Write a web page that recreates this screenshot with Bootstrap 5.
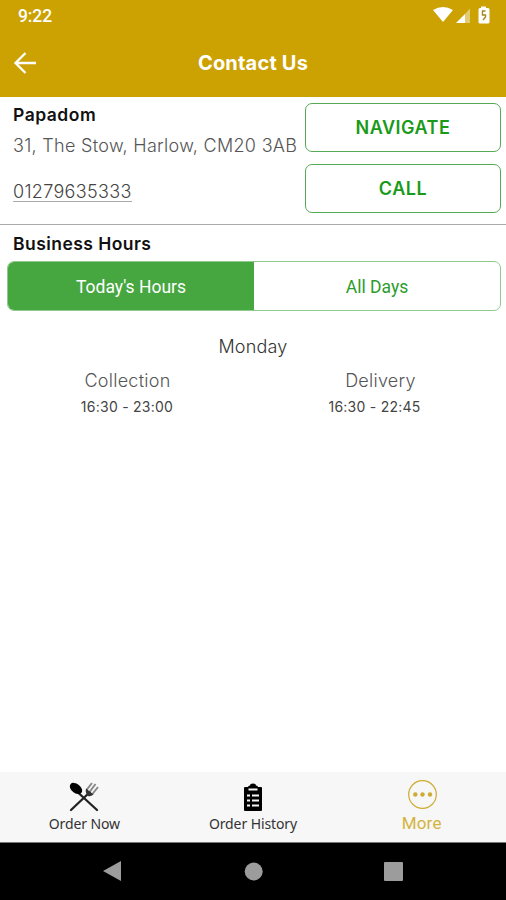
<!DOCTYPE html>
<html lang="en">
<head>
<meta charset="utf-8">
<meta name="viewport" content="width=device-width, initial-scale=1">
<title>Contact Us</title>
<link href="https://cdn.jsdelivr.net/npm/bootstrap@5.3.0/dist/css/bootstrap.min.css" rel="stylesheet">
<style>
body{font-family:Inter,"Liberation Sans",sans-serif;color:#111;background:#fff;overflow:hidden}
svg{display:block;overflow:visible}
.app{height:900px}
.topbar{background:#cca102;height:97px;color:#fff}
.status{height:32px;padding:0 16px 0 18px}
.clock{font:500 17.5px/32px Roboto,sans-serif;letter-spacing:-.1px}
.titlebar{height:65px;display:grid;grid-template-columns:50px 1fr 50px;padding-bottom:3px}
.titlebar h1{font-size:20px;font-weight:700;letter-spacing:.2px;line-height:26px}
.info{height:128px;border-bottom:1px solid #aaa;padding:6px 5px 0 13px}
.name{font-size:17.5px;font-weight:600;line-height:24px;letter-spacing:.5px}
.addr{font-size:18px;line-height:26px;margin-top:6px;color:#555;font-weight:300;white-space:nowrap;letter-spacing:.3px}
.phone{font-size:18px;line-height:19px;margin-top:23px;color:#444;font-weight:300;border-bottom:1px solid #aaa;letter-spacing:.32px}
.actions{width:196px;gap:12px}
.act{height:49px;border:1px solid #56aa56;border-radius:7px;color:#199a19;font-size:18px;font-weight:600;letter-spacing:.5px;padding:0}
.bh{height:36px;padding-left:13px;font-size:17.5px;font-weight:600;line-height:37px;letter-spacing:.45px}
.seg{height:50px;margin:0 5px 0 7px;border:1px solid #91c991;border-radius:7px;overflow:hidden;font:400 17.5px/50px Roboto,sans-serif;color:#2b9c2b}
.seg .on{background:#46a740;color:#fff}
.day{font-size:18px;line-height:24px;margin-top:24px;color:#333;font-weight:300;letter-spacing:.2px}
.kind{font-size:18px;line-height:24px;color:#555;font-weight:300;letter-spacing:.25px;padding-left:2px}
.hrs{font-size:14px;line-height:20px;margin-top:4px;color:#444;letter-spacing:.25px;padding-left:1px}
.hours-row{padding-top:10px}
.late{padding-right:11px}
.tabs{height:70px;background:#f7f7f7;font-family:"Noto Sans",sans-serif;font-size:14px;color:#333}
.tab{height:70px}
.tab span{line-height:20px;letter-spacing:-.1px}
.tab .more{font-family:Roboto,sans-serif;font-size:17px;color:#d5b33c;font-weight:400;letter-spacing:.2px;margin-top:3px}
.sys{height:58px;background:#000;border-top:1px solid #777}
</style>
</head>
<body>
<div class="app d-flex flex-column">
  <header class="topbar">
    <div class="status d-flex justify-content-between">
      <span class="clock">9:22</span>
      <svg width="58" height="32" viewBox="432 0 58 32" fill="#fff"><path d="M433 10Q443 4 453 10L443 22Z"/><path d="M456 23 465 14V23Z"/><path d="M465 14 470 8.5V23H465Z" opacity=".45"/><path d="M481 8V6.500h5V8h2q1.500 0 1.500 1.500V22q0 1.500-1.500 1.500h-8q-1.500 0-1.500-1.500V9.500Q478.500 8 480 8Z"/><path d="M485.500 11H482.500V15H485.500V17L483 20" fill="none" stroke="#a88522" stroke-width="1.400"/></svg>
    </div>
    <div class="titlebar align-items-center">
      <svg width="50" height="30" viewBox="0 0 50 30" fill="none" stroke="#fff" stroke-width="2.300"><path d="M36 15H16M25.500 5 15.500 15 25.500 25"/></svg>
      <h1 class="m-0 text-center">Contact Us</h1>
    </div>
  </header>
  <main class="flex-grow-1">
    <section class="info d-flex justify-content-between">
      <div class="d-flex flex-column align-items-start">
        <div class="name">Papadom</div>
        <div class="addr">31, The Stow, Harlow, CM20 3AB</div>
        <div class="phone">01279635333</div>
      </div>
      <div class="actions d-flex flex-column">
        <button class="btn act">NAVIGATE</button>
        <button class="btn act">CALL</button>
      </div>
    </section>
    <section>
      <h2 class="bh m-0">Business Hours</h2>
      <div class="seg d-flex text-center"><div class="on col-6">Today's Hours</div><div class="col-6">All Days</div></div>
      <div class="day text-center">Monday</div>
      <div class="hours-row row g-0 text-center">
        <div class="col-6"><div class="kind">Collection</div><div class="hrs">16:30 - 23:00</div></div>
        <div class="col-6"><div class="kind">Delivery</div><div class="hrs late">16:30 - 22:45</div></div>
      </div>
    </section>
  </main>
  <nav class="tabs row g-0 text-center">
    <div class="tab col-4 d-flex flex-column align-items-center pt-2">
      <svg class="mt-1" width="32" height="30" viewBox="0 0 32 30"><path d="M10 8.500 29 26M22 8 3 26" stroke="#222" stroke-width="2.300" stroke-linecap="round"/><ellipse cx="8" cy="4.500" rx="7" ry="4.600" transform="rotate(38 8 4.500)"/><path d="M18.500 6 24-1M21.500 8l6-8M24 10.500l6-7.500" stroke="#888" stroke-width="2"/><path d="M18 4.500 25.500 10.500Q22.500 13 20 12Q17 9 18 4.500Z" fill="#333"/></svg>
      <span>Order Now</span>
    </div>
    <div class="tab col-4 d-flex flex-column align-items-center pt-2">
      <svg class="mt-1" width="18" height="30" viewBox="0 0 18 30"><path d="M1 3H4Q4 1.500 6 1.500Q6-.5 9-.5T12 1.500Q14 1.500 14 3h3q1 0 1 1V26q0 1-1 1H1q-1 0-1-1V4q0-1 1-1Z"/><path d="M4.500 5.500h9M3 11.500h3M3 16.500h3M3 21.500h3M8 11.500h7M8 16.500h7M8 21.500h7" stroke="#f7f7f7" stroke-width="1.800"/></svg>
      <span>Order History</span>
    </div>
    <div class="tab col-4 d-flex flex-column align-items-center pt-2">
      <svg width="30" height="30" viewBox="0 0 30 30" fill="#cfab32"><circle cx="15.500" cy="14.500" r="13.800" fill="none" stroke="#cfab32" stroke-width="1.200"/><circle cx="8.300" cy="14.500" r="2.200"/><circle cx="15.500" cy="14.500" r="2.200"/><circle cx="23" cy="14.500" r="2.200"/></svg>
      <span class="more">More</span>
    </div>
  </nav>
  <div class="sys"><svg width="506" height="57" viewBox="0 843 506 57" fill="#9c9c9c"><path d="M103 871 121 861V881Z"/><circle cx="253.700" cy="871.500" r="9"/><rect x="384" y="862" width="19" height="19" rx="1"/></svg></div>
</div>
<script src="https://cdn.jsdelivr.net/npm/bootstrap@5.3.0/dist/js/bootstrap.bundle.min.js"></script>
</body>
</html>
